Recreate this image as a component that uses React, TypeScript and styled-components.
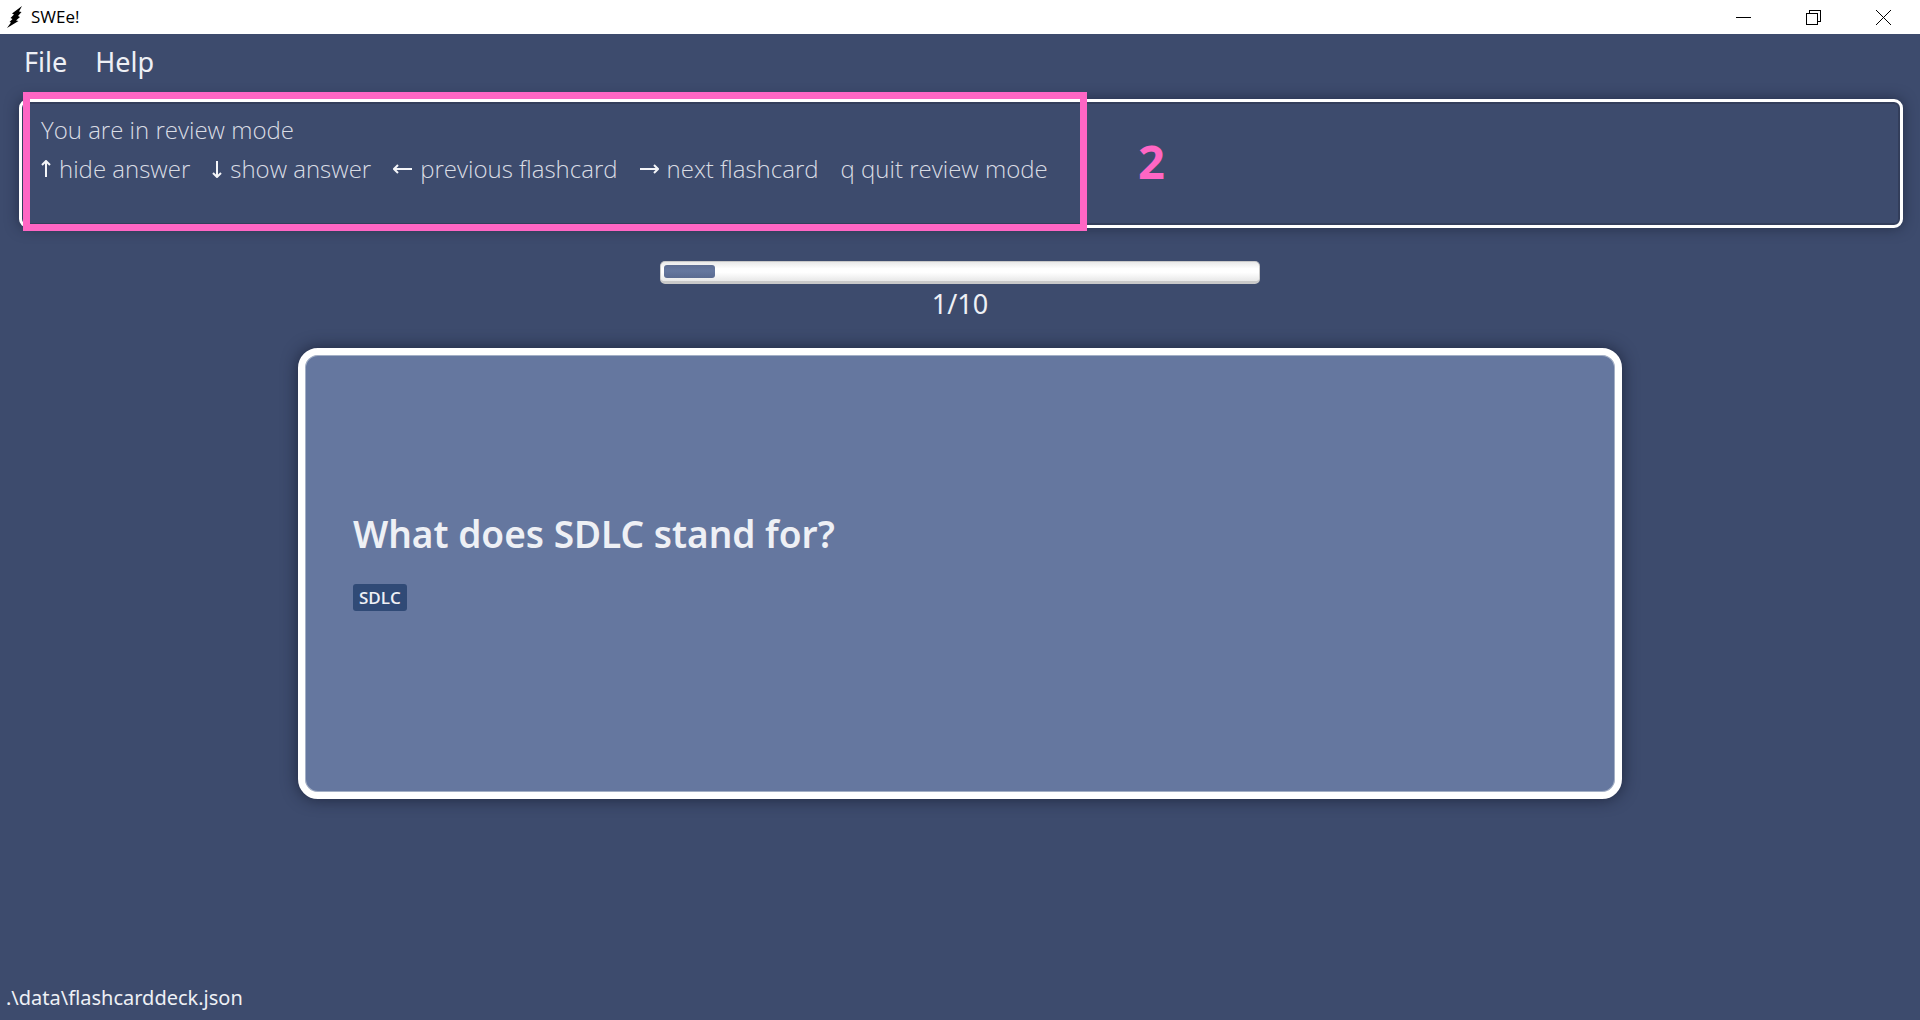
import React from "react";
import styled, { createGlobalStyle } from "styled-components";

const GlobalStyle = createGlobalStyle`
  *, *::before, *::after { box-sizing: border-box; }
  body {
    margin: 0;
    background: #3d4b6d;
    color: #eef0f5;
    font-family: "Noto Sans", sans-serif;
  }
`;

const Window = styled.div`
  display: flex;
  flex-direction: column;
  min-height: 100vh;
`;

const TitleBar = styled.header`
  display: flex;
  align-items: center;
  height: 34px;
  padding: 0 2px 0 7px;
  background: #fff;
  color: #000;
`;

const AppTitle = styled.h1`
  flex: 1;
  margin: 0 0 0 8px;
  font: 400 17px/24px "Open Sans", sans-serif;
`;

const WindowButton = styled.button`
  display: flex;
  align-items: center;
  justify-content: center;
  width: 70px;
  height: 32px;
  padding: 0;
  border: 0;
  background: transparent;
  color: #000;
`;

const MenuBar = styled.nav`
  display: flex;
  gap: 28px;
  padding: 8px 24px;
`;

const MenuButton = styled.button`
  padding: 0;
  border: 0;
  background: transparent;
  color: #eef0f5;
  font: 400 27px/40px "Noto Sans", sans-serif;
`;

const ResultPanel = styled.section`
  position: relative;
  height: 129px;
  margin: 9px 17px 0 19px;
  padding: 8px 19px;
  border: 3px solid #fff;
  border-radius: 9px;
  box-shadow: 0 0 14px rgba(20, 26, 46, 0.6), inset 0 0 0 2px #333e5b;
  color: #d9dce4;
  font: 300 24px/39px "Open Sans", sans-serif;
`;

const Message = styled.p`
  margin: 0;
`;

const Hints = styled.ul`
  display: flex;
  gap: 22px;
  margin: 0;
  padding: 0;
  list-style: none;
`;

const Hint = styled.li`
  display: flex;
  align-items: center;
  gap: 8px;
  white-space: nowrap;
`;

const Callout = styled.div`
  position: absolute;
  top: -10px;
  left: 1px;
  width: 1064px;
  height: 139px;
  border: 7px solid #ff66c4;
`;

const CalloutNumber = styled.span`
  position: absolute;
  top: 29px;
  left: 1116px;
  color: #ff66c4;
  font: 700 47px/60px "Noto Sans", sans-serif;
`;

const Review = styled.main`
  display: flex;
  flex: 1;
  flex-direction: column;
  align-items: center;
  padding: 33px 298px 0;
`;

const ProgressTrack = styled.div`
  width: 600px;
  height: 23px;
  padding: 3px;
  border: solid #c9c9c9;
  border-width: 1px 1px 3px;
  border-radius: 5px;
  background: linear-gradient(#e9e9e9, #fff 35%, #fff 55%, #e8e8e8);
`;

const ProgressFill = styled.div`
  height: 13px;
  border-radius: 3px;
  background: linear-gradient(#5d6d92, #65779f 45%, #5a6b91);
`;

const Counter = styled.p`
  margin: 0;
  font: 400 27px/40px "Noto Sans", sans-serif;
`;

const Card = styled.article`
  display: flex;
  flex-direction: column;
  align-items: flex-start;
  justify-content: center;
  gap: 24px;
  width: 100%;
  height: 451px;
  margin-top: 24px;
  padding: 0 48px 29px;
  border: 7px solid #fff;
  border-radius: 20px;
  background: #65779f;
  box-shadow: 0 0 16px rgba(20, 26, 46, 0.75), inset 0 0 0 1px #a3afc5;
`;

const Question = styled.h2`
  margin: 0;
  font: 600 37px/52px "Noto Sans", sans-serif;
`;

const Tag = styled.span`
  padding: 0 6px;
  border-radius: 3px;
  background: #304a76;
  font: 600 17px/27px "Open Sans", sans-serif;
`;

const StatusBar = styled.footer`
  padding: 0 6px 6px;
  font: 400 20px/32px "Noto Sans", sans-serif;
`;

type Direction = "up" | "down" | "left" | "right";

const arrows: Record<Direction, { width: number; height: number; path: string }> = {
  up: { width: 10, height: 18, path: "M5 17V2M1 5L5 1L9 5" },
  down: { width: 10, height: 18, path: "M5 1V16M1 13L5 17L9 13" },
  left: { width: 19, height: 10, path: "M19 5H2M5 1L1 5L5 9" },
  right: { width: 19, height: 10, path: "M0 5H17M14 1L18 5L14 9" },
};

function Arrow({ direction }: { direction: Direction }) {
  const { width, height, path } = arrows[direction];
  return (
    <svg width={width} height={height} aria-hidden="true">
      <path d={path} fill="none" stroke="#f4f5f8" strokeWidth="2" />
    </svg>
  );
}

const hints: { direction?: Direction; text: string }[] = [
  { direction: "up", text: "hide answer" },
  { direction: "down", text: "show answer" },
  { direction: "left", text: "previous flashcard" },
  { direction: "right", text: "next flashcard" },
  { text: "q quit review mode" },
];

const menus = ["File", "Help"];
const current = 1;
const total = 10;

export default function App() {
  return (
    <>
      <GlobalStyle />
      <Window>
        <TitleBar>
          <svg width="16" height="22" viewBox="0 0 16 22" aria-hidden="true">
            <path d="M15 0L5 7.5L7 8.5L3.5 12L5.5 13L2.5 16L4 16.5L0 22L11.5 15L9 14.5L13 11L11 10L14.5 6L12 5.5Z" fill="#000" />
          </svg>
          <AppTitle>SWEe!</AppTitle>
          <WindowButton aria-label="Minimize">
            <svg width="15" height="15" shapeRendering="crispEdges">
              <path d="M0 7.5H15" stroke="#000" />
            </svg>
          </WindowButton>
          <WindowButton aria-label="Restore">
            <svg width="15" height="15" fill="none" stroke="#000" shapeRendering="crispEdges">
              <path d="M0.5 3.5H11.5V14.5H0.5ZM3.5 3.5V0.5H14.5V11.5H11.5" />
            </svg>
          </WindowButton>
          <WindowButton aria-label="Close">
            <svg width="15" height="15">
              <path d="M0 0L15 15M15 0L0 15" stroke="#000" />
            </svg>
          </WindowButton>
        </TitleBar>
        <MenuBar>
          {menus.map((name) => (
            <MenuButton key={name}>{name}</MenuButton>
          ))}
        </MenuBar>
        <ResultPanel>
          <Message>You are in review mode</Message>
          <Hints>
            {hints.map(({ direction, text }) => (
              <Hint key={text}>
                {direction && <Arrow direction={direction} />}
                {text}
              </Hint>
            ))}
          </Hints>
          <Callout />
          <CalloutNumber>2</CalloutNumber>
        </ResultPanel>
        <Review>
          <ProgressTrack role="progressbar" aria-label="Review progress" aria-valuenow={current} aria-valuemax={total}>
            <ProgressFill style={{ width: `calc(${(current / total) * 100}% - 8px)` }} />
          </ProgressTrack>
          <Counter>
            {current}/{total}
          </Counter>
          <Card>
            <Question>What does SDLC stand for?</Question>
            <Tag>SDLC</Tag>
          </Card>
        </Review>
        <StatusBar>.\data\flashcarddeck.json</StatusBar>
      </Window>
    </>
  );
}
